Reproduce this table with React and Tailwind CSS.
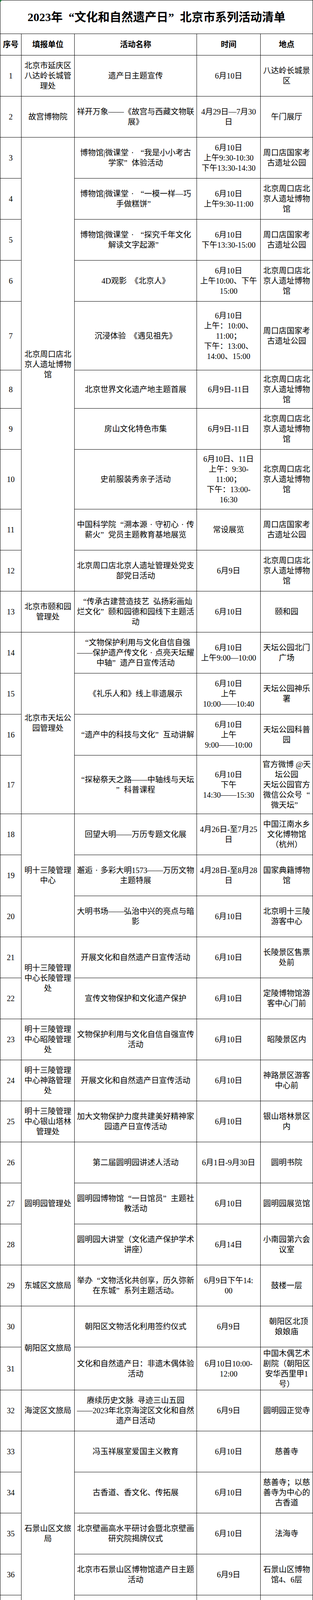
import React from 'react';

const SPANS = {
  2: 'row-span-2',
  3: 'row-span-3',
  4: 'row-span-4',
  5: 'row-span-5',
  10: 'row-span-10',
};

const ZKD = ['北京周口店北', '京人遗址博物', '馆'];
const ZKD_PARK = ['周口店国家考', '古遗址公园'];
const DZS = ['大钟寺古钟博', '物馆'];

const rows = [
  { n: 1, unit: ['北京市延庆区', '八达岭长城管', '理处'], act: ['遗产日主题宣传'], time: ['6月10日'], place: ['八达岭长城景', '区'] },
  { n: 2, unit: ['故宫博物院'], act: ['祥开万象——《故宫与西藏文物联', '展》'], time: ['4月29日—7月30', '日'], place: ['午门展厅'] },
  { n: 3, unit: ZKD, span: 10, act: ['博物馆|微课堂·“我是小小考古', '学家”体验活动'], time: ['6月10日', '上午9:30-10:30', '下午13:30-14:30'], place: ZKD_PARK },
  { n: 4, act: ['博物馆|微课堂·“一模一样—巧', '手做糕饼”'], time: ['6月10日', '上午9:30-11:00'], place: ZKD },
  { n: 5, act: ['博物馆|微课堂·“探究千年文化', '解读文字起源”'], time: ['6月10日', '下午13:30-15:00'], place: ZKD_PARK },
  { n: 6, act: ['4D观影  《北京人》'], time: ['6月10日', '上午10:00、下午', '15:00'], place: ZKD },
  { n: 7, act: ['沉浸体验  《遇见祖先》'], time: ['6月10日', '上午：10:00、', '11:00；', '下午：13:00、', '14:00、15:00'], place: ZKD_PARK },
  { n: 8, act: ['北京世界文化遗产地主题首展'], time: ['6月9日-11日'], place: ZKD },
  { n: 9, act: ['房山文化特色市集'], time: ['6月9日-11日'], place: ZKD },
  { n: 10, act: ['史前服装秀亲子活动'], time: ['6月10日、11日', '上午：9:30-', '11:00；', '下午：13:00-', '16:30'], place: ZKD },
  { n: 11, act: ['中国科学院“溯本源·守初心·传', '薪火”党员主题教育基地展览'], time: ['常设展览'], place: ZKD_PARK },
  { n: 12, act: ['北京周口店北京人遗址管理处党支', '部党日活动'], time: ['6月9日'], place: ZKD },
  { n: 13, unit: ['北京市颐和园', '管理处'], act: ['“传承古建营造技艺  弘扬彩画灿', '烂文化”颐和园德和园线下主题活', '动'], time: ['6月10日'], place: ['颐和园'] },
  { n: 14, unit: ['北京市天坛公', '园管理处'], span: 4, act: ['“文物保护利用与文化自信自强', '——保护遗产传文化·点亮天坛耀', '中轴”遗产日宣传活动'], time: ['6月10日', '上午9:00—10:00'], place: ['天坛公园北门', '广场'] },
  { n: 15, act: ['《礼乐人和》线上非遗展示'], time: ['6月10日', '上午', '10:00——10:40'], place: ['天坛公园神乐', '署'] },
  { n: 16, act: ['“遗产中的科技与文化”互动讲解'], time: ['6月10日', '上午', '9:00——10:00'], place: ['天坛公园科普', '园'] },
  { n: 17, act: ['“探秘祭天之路——中轴线与天坛', '”科普课程'], time: ['6月10日', '下午', '14:30——15:30'], place: ['官方微博 @天', '坛公园', '天坛公园官方', '微信公众号“', '微天坛”'] },
  { n: 18, unit: ['明十三陵管理', '中心'], span: 3, act: ['回望大明——万历专题文化展'], time: ['4月26日-至7月25', '日'], place: ['中国江南水乡', '文化博物馆', '（杭州）'] },
  { n: 19, act: ['邂逅·多彩大明1573——万历文物', '主题特展'], time: ['4月28日-至8月28', '日'], place: ['国家典籍博物', '馆'] },
  { n: 20, act: ['大明书场——弘治中兴的亮点与暗', '影'], time: ['6月10日'], place: ['北京明十三陵', '游客中心'] },
  { n: 21, unit: ['明十三陵管理', '中心长陵管理', '处'], span: 2, act: ['开展文化和自然遗产日宣传活动'], time: ['6月10日'], place: ['长陵景区售票', '处前'] },
  { n: 22, act: ['宣传文物保护和文化遗产保护'], time: ['6月10日'], place: ['定陵博物馆游', '客中心门前'] },
  { n: 23, unit: ['明十三陵管理', '中心昭陵管理', '处'], act: ['文物保护利用与文化自信自强宣传', '活动'], time: ['6月10日'], place: ['昭陵景区内'] },
  { n: 24, unit: ['明十三陵管理', '中心神路管理', '处'], act: ['开展文化和自然遗产日宣传活动'], time: ['6月10日'], place: ['神路景区游客', '中心前'] },
  { n: 25, unit: ['明十三陵管理', '中心银山塔林', '管理处'], act: ['加大文物保护力度共建美好精神家', '园遗产日宣传活动'], time: ['6月10日'], place: ['银山塔林景区', '内'] },
  { n: 26, unit: ['圆明园管理处'], span: 3, act: ['第二届圆明园讲述人活动'], time: ['6月1日-9月30日'], place: ['圆明书院'] },
  { n: 27, act: ['圆明园博物馆“一日馆员”主题社', '教活动'], time: ['6月10日'], place: ['圆明园展览馆'] },
  { n: 28, act: ['圆明园大讲堂（文化遗产保护学术', '讲座）'], time: ['6月14日'], place: ['小南园第六会', '议室'] },
  { n: 29, unit: ['东城区文旅局'], act: ['举办“文物活化共创享，历久弥新', '在东城”系列主题活动。'], time: ['6月9日下午14:', '00'], place: ['鼓楼一层'] },
  { n: 30, unit: ['朝阳区文旅局'], span: 2, act: ['朝阳区文物活化利用签约仪式'], time: ['6月9日'], place: ['  朝阳区北顶', '娘娘庙'] },
  { n: 31, act: ['文化和自然遗产日：非遗木偶体验', '活动'], time: ['6月10日10:00-', '12:00'], place: ['中国木偶艺术', '剧院（朝阳区', '安华西里甲1', '号）'] },
  { n: 32, unit: ['海淀区文旅局'], act: ['赓续历史文脉  寻迹三山五园', '——2023年北京海淀区文化和自然', '遗产日活动'], time: ['6月9日'], place: ['圆明园正觉寺'] },
  { n: 33, unit: ['石景山区文旅', '局'], span: 5, act: ['冯玉祥展室爱国主义教育'], time: ['6月10日'], place: ['慈善寺'] },
  { n: 34, act: ['古香道、香文化、传拓展'], time: ['6月10日'], place: ['慈善寺；以慈', '善寺为中心的', '古香道'] },
  { n: 35, act: ['北京壁画高水平研讨会暨北京壁画', '研究院揭牌仪式'], time: ['6月10日'], place: ['法海寺'] },
  { n: 36, act: ['北京市石景山区博物馆遗产日主题', '活动'], time: ['6月9日'], place: ['石景山区博物', '馆4、6层'] },
  { n: 37, act: ['1.石刻专家讲座', '2.园内文物摄影作品展', '3.石刻文物白描作品展'], time: ['6月10日'], place: ['石景山区石刻', '文物园'] },
  { n: 38, unit: ['昌平区博物馆'], act: ['博物馆扎染艺术体验活动'], time: ['6月10日'], place: ['昌平区博物馆', '二楼展厅'] },
  { n: 39, unit: ['怀柔区文旅局'], span: 4, act: ['加大文物保护力度，共建美好精神', '家园--在箭扣长城脚下，参观长城', '修复实践基地展，开展宣传教育活', '动。'], time: ['6月10日'], place: ['西栅子村'] },
  { n: 40, act: ['《当传统遇到时尚——', '纹饰大变身》社教活动'], time: ['6月9日'], place: ['怀柔区博物馆', '三层'] },
  { n: 41, act: ['《鼎天立地—馆藏青铜器大揭秘》', '课程'], time: ['6月13日'], place: ['怀柔博物馆三', '层'] },
  { n: 42, act: ['安全守护者—消防老爷车造型艺术', '展'], time: ['4月28日-6月30日'], place: ['北京老爷车博', '物馆'] },
  { n: 43, unit: ['平谷区文物管', '理所'], span: 3, act: ['“对话历史——体验上宅文化”宣', '教活动'], time: ['6月9日'], place: ['兴谷街道'] },
  { n: 44, act: ['“以铜为镜  鉴古耀今”青少年社', '教活动'], time: ['6月10日'], place: ['平谷区博物馆'] },
  { n: 45, act: ['《平谷的长城文化》图片展'], time: ['6月10日—6月30', '日'], place: ['平谷区博物馆'] },
  { n: 46, unit: ['中国第四纪冰', '川遗迹陈列馆'], act: ['“美满京城  魅力非遗”非遗市集', '活动'], time: ['6月11日'], place: ['模式口居委会', '门前'] },
  { n: 47, unit: ['北京焦庄户地', '道战遗址纪念', '馆'], act: ['指尖非遗匠心编绘'], raised: true, time: ['6月10日'], place: ['纪念馆'] },
  { n: 48, unit: ['北京白塔寺管', '理处'], act: ['2023北京白塔文化周活动'], time: ['6月10日'], place: ['北京白塔寺管', '理处'] },
  { n: 49, unit: ['北京考古遗址', '博物馆'], act: ['都城肇始——纪念北京建都870周', '年考古成果展'], time: ['6月10日'], place: ['北京考古遗址', '博物馆金中都', '水关遗址馆区', '一层展厅'] },
  { n: 50, unit: ['徐悲鸿纪念馆'], act: ['对话——策展人带你踏上徐悲鸿南', '洋之路'], time: ['6月10日', '上午10:00'], place: ['展厅四层展厅', '及规定区域内'] },
  { n: 51, unit: ['北京艺术博物', '馆'], act: ['《万寿寺与北京大运河》讲座'], time: ['6月10日', '上午 9:30-11:30'], place: ['北京艺术博物', '馆·北岸讲坛'] },
  { n: 52, unit: DZS, span: 3, act: ['“延时开放”：文化和自然遗产日', '当天延时开放至19:30（19:00停止', '售票入馆）'], time: ['6月10日'], place: DZS },
  { n: 53, act: ['“钟琴车体验”：观众可以体验大', '钟寺古钟博物馆科普宣传车——钟', '琴车。'], time: ['6月10日'], place: DZS },
  { n: 54, act: ['“古钟纹饰印刷体验”'], time: ['6月10日'], place: DZS },
];

// full-width quotes and dots, like the CJK font of the sheet
function Txt({ s }) {
  return s.split(/([“”·])/).map((p, i) => {
    if (p === '“') return <span key={i} className="inline-block w-[1em] text-right">“</span>;
    if (p === '”') return <span key={i} className="inline-block w-[1em] text-left">”</span>;
    if (p === '·') return <span key={i} className="inline-block w-[1em] text-center">·</span>;
    return p;
  });
}

function Cell({ lines, className = '' }) {
  return (
    <div className={`flex flex-col items-center justify-center bg-white px-[2px] text-center ${className}`}>
      {lines.map((l, i) => (
        <div key={i} className="h-[26px] whitespace-pre">
          <Txt s={l} />
        </div>
      ))}
    </div>
  );
}

export default function App() {
  return (
    <div
      lang="zh-CN"
      className="relative w-[801px] bg-black p-px text-black font-['Liberation_Serif','Noto_Sans_CJK_SC',serif] text-[20px] leading-[26px]"
    >
      <svg className="absolute left-0 top-0" width="5" height="7" viewBox="0 0 5 7">
        <polygon points="0,0 5,0 0,7" fill="#217a3c" />
      </svg>
      <div className="grid grid-cols-[53px_135px_312px_162px_133px] grid-rows-[85px_54px_repeat(6,104px)_175px_97px_104px_152px_repeat(6,104px)_149px_repeat(13,104px)_109px_repeat(23,104px)] gap-px">
        <div className="col-span-5 flex items-center justify-center bg-white text-[30px] leading-[40px] font-bold">
          <Txt s="2023年“文化和自然遗产日”北京市系列活动清单" />
        </div>
        {['序号', '填报单位', '活动名称', '时间', '地点'].map((h) => (
          <div key={h} className="flex items-center justify-center bg-white font-bold">
            {h}
          </div>
        ))}
        {rows.map((r) => (
          <React.Fragment key={r.n}>
            <Cell lines={[String(r.n)]} />
            {r.unit && <Cell lines={r.unit} className={SPANS[r.span] || ''} />}
            <Cell lines={r.act} className={r.raised ? 'pb-[20px]' : ''} />
            <Cell lines={r.time} />
            <Cell lines={r.place} />
          </React.Fragment>
        ))}
      </div>
    </div>
  );
}
